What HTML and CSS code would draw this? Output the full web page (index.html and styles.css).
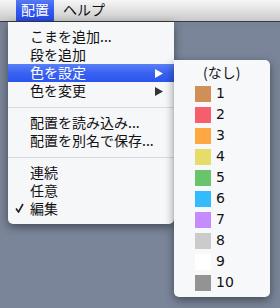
FILE: index.html
```html
<!DOCTYPE html>
<html lang="ja">
<head>
<meta charset="utf-8">
<link rel="stylesheet" href="styles.css">
</head>
<body>
<div class="desktop">
  <div class="menubar">
    <span class="mb-item active">配置</span>
    <span class="mb-item">ヘルプ</span>
  </div>

  <div class="menu main">
    <div class="row">こまを追加...</div>
    <div class="row">段を追加</div>
    <div class="row sel"><span>色を設定</span><svg class="arrow" viewBox="0 0 8 9"><polygon points="0,0 8,4.5 0,9"/></svg></div>
    <div class="row"><span>色を変更</span><svg class="arrow" viewBox="0 0 8 9"><polygon points="0,0 8,4.5 0,9"/></svg></div>
    <div class="sep"></div>
    <div class="row">配置を読み込み...</div>
    <div class="row">配置を別名で保存...</div>
    <div class="sep"></div>
    <div class="row">連続</div>
    <div class="row">任意</div>
    <div class="row"><svg class="check" viewBox="0 0 9 10"><path d="M1 5.5 L3.5 9 L8 1" fill="none" stroke="#222" stroke-width="1.6"/></svg>編集</div>
  </div>

  <div class="menu sub">
    <div class="none">(なし)</div>
    <div class="crow"><span class="sw" style="background:#d18f58"></span>1</div>
    <div class="crow"><span class="sw" style="background:#f65e6e"></span>2</div>
    <div class="crow"><span class="sw" style="background:#ffa742"></span>3</div>
    <div class="crow"><span class="sw" style="background:#e6dc67"></span>4</div>
    <div class="crow"><span class="sw" style="background:#69c46b"></span>5</div>
    <div class="crow"><span class="sw" style="background:#33bcfd"></span>6</div>
    <div class="crow"><span class="sw" style="background:#c48cff"></span>7</div>
    <div class="crow"><span class="sw" style="background:#cbcbcb"></span>8</div>
    <div class="crow"><span class="sw" style="background:#ffffff"></span>9</div>
    <div class="crow"><span class="sw" style="background:#939393"></span>10</div>
  </div>
</div>
</body>
</html>
```
FILE: styles.css
```css
html, body {
  margin: 0;
  padding: 0;
}
body {
  width: 280px;
  height: 308px;
  overflow: hidden;
  font-family: "DejaVu Sans", "Noto Sans CJK JP", sans-serif;
  font-size: 14px;
  color: #111;
}
.desktop {
  position: relative;
  width: 280px;
  height: 308px;
  background: linear-gradient(#5d677a 0px, #737e93 10px, #7a8599 30px);
}
.menubar {
  height: 21px;
  border-bottom: 1px solid #3a3a3a;
  background: linear-gradient(#f6f6f6, #dcdcdc 60%, #c9c9c9);
  display: flex;
  padding-left: 16px;
  font-family: "Noto Sans CJK JP", sans-serif;
}
.mb-item {
  line-height: 19px;
  padding: 0 5px;
  color: #111;
}
.mb-item + .mb-item {
  margin-left: 4px;
}
.mb-item.active {
  color: #fff;
  background: linear-gradient(#5679f3, #3459ee 50%, #2448e6);
}
.menu {
  position: absolute;
  background: #f6f7f9;
  box-shadow: 0 3px 10px rgba(0, 0, 0, 0.45);
}
.main {
  left: 8px;
  top: 22px;
  width: 166px;
  padding: 6px 0 6px;
  border-radius: 0 0 5px 5px;
  font-family: "Noto Sans CJK JP", sans-serif;
}
.row {
  position: relative;
  box-sizing: border-box;
  height: 18px;
  line-height: 15px;
  padding: 0 11px 2px 22px;
  display: flex;
  align-items: center;
  justify-content: space-between;
}
.row > span { line-height: 15px; }
.row.sel {
  color: #fff;
  background: linear-gradient(#5a80f6, #3a62f1 50%, #2a54ee);
}
.arrow {
  width: 8px;
  height: 9px;
  fill: #333;
  margin-top: 2px;
}
.sel .arrow { fill: #fff; }
.check {
  position: absolute;
  left: 7px;
  top: 3px;
  width: 9px;
  height: 10px;
}
.sep {
  height: 14px;
  display: flex;
  align-items: center;
}
.sep::before {
  content: "";
  flex: 1;
  height: 1px;
  background: #d9dadd;
  margin-top: 1px;
}
.sub {
  left: 174px;
  top: 60px;
  width: 96px;
  padding: 4px 0;
  border-radius: 0 5px 5px 5px;
  background: #f7f8fa;
}
.none {
  height: 19px;
  line-height: 16px;
  padding-left: 29px;
  font-family: "Noto Sans CJK JP", sans-serif;
}
.crow {
  height: 21px;
  display: flex;
  align-items: center;
  padding-left: 21px;
  line-height: 21px;
}
.sw {
  width: 16px;
  height: 16px;
  margin-right: 5px;
}
```
